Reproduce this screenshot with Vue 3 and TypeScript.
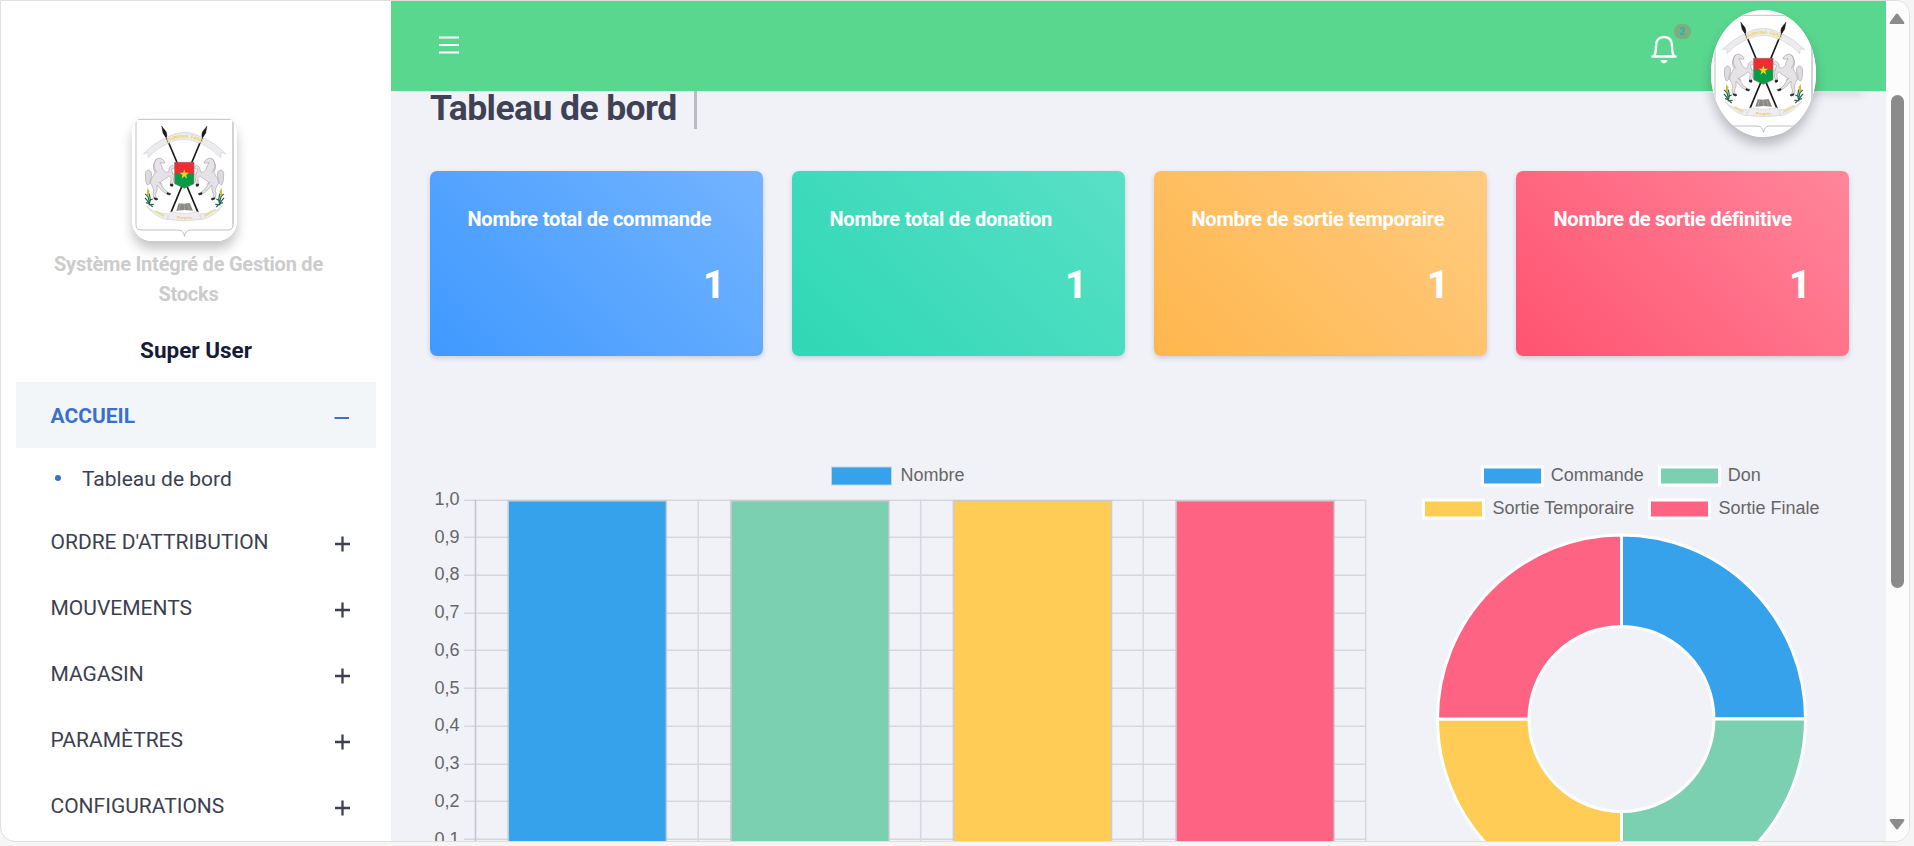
<script setup lang="ts">
interface Series { label: string; color: string }

const cards = [
  { title: 'Nombre total de commande', value: 1, tone: 'blue' },
  { title: 'Nombre total de donation', value: 1, tone: 'green' },
  { title: 'Nombre de sortie temporaire', value: 1, tone: 'orange' },
  { title: 'Nombre de sortie définitive', value: 1, tone: 'red' },
]
const menu = ["ORDRE D'ATTRIBUTION", 'MOUVEMENTS', 'MAGASIN', 'PARAMÈTRES', 'CONFIGURATIONS']
const series: Series[] = [
  { label: 'Commande', color: '#36a2eb' },
  { label: 'Don', color: '#7bd0b1' },
  { label: 'Sortie Temporaire', color: '#ffcd56' },
  { label: 'Sortie Finale', color: '#ff6384' },
]
const legend = [
  { x: 72.5, y: 17, tx: 140.8 },
  { x: 249.5, y: 17, tx: 317.8 },
  { x: 13.5, y: 50, tx: 82.5 },
  { x: 239.5, y: 50, tx: 308.5 },
]
const ticks = ['1,0', '0,9', '0,8', '0,7', '0,6', '0,5', '0,4', '0,3', '0,2', '0,1']
const step = 37.74
const tickY = (i: number) => Math.round(50 + i * step - 0.5) + 0.5

// Quarter of the ring, clockwise from the top
function arc(i: number): string {
  const cx = 211.5, cy = 269, R = 184, r = 92.5
  const p = (rad: number, k: number) => {
    const a = (k * Math.PI) / 2 - Math.PI / 2
    return `${(cx + rad * Math.cos(a)).toFixed(2)} ${(cy + rad * Math.sin(a)).toFixed(2)}`
  }
  return `M${p(R, i)}A${R} ${R} 0 0 1 ${p(R, i + 1)}L${p(r, i + 1)}A${r} ${r} 0 0 0 ${p(r, i)}Z`
}
</script>

<template>
  <svg class="defs" width="0" height="0" aria-hidden="true">
    <symbol id="emblem" viewBox="396 102 315 381">
      <rect x="396" y="102" width="315" height="381" fill="#fff" />
      <path d="M408 118H699V434Q699 450 683 450H570Q556 452 553.500 469Q551 452 537 450H424Q408 450 408 434Z" fill="none" stroke="#b4b4b4" stroke-width="2.500" />
      <path d="M699 122V434" stroke="#c4c4c4" stroke-width="3" />
      <g stroke="#1b1b1b" stroke-width="5" fill="#1b1b1b">
        <path d="M490 150L594 397M616 150L513 397" />
        <path d="M485 138L499 156L501 166L497 171L489 160Z M621 138L607 156L605 166L609 171L617 160Z" stroke-width="1" />
      </g>
      <g fill="#ececf0" stroke="#c6c6cc" stroke-width="1.500">
        <path d="M500 172Q553 142 606 172L601 190Q553 166 505 190Z" />
        <path d="M496 174Q460 190 430 221L443 218L444 233Q470 205 503 191Z" />
        <path d="M611 174Q647 190 677 221L664 218L662 233Q636 205 604 191Z" />
      </g>
      <path id="bannerTop" d="M503 187Q553 160 606 187" fill="none" />
      <text class="banner"><textPath href="#bannerTop" startOffset="2">BURKINA&#160; FASO</textPath></text>
      <g id="steed">
        <path d="M464 247Q466 235 477 234L486 237L495 245L493 250L480 248Q487 258 488 268Q497 280 506 276L508 263L517 255L523 260V266L514 267L519 283L521 304L515 315L511 308L514 295L507 287Q500 296 491 299L480 308L492 328L508 340L504 344L488 334L471 315Q474 331 466 344L470 357L462 356L459 343Q465 330 457 319Q448 310 453 298Q460 288 465 277Q458 265 461 253Z" fill="#e6e3e7" stroke="#aaa6ac" stroke-width="2" />
        <path d="M453 294Q458 278 449 271Q439 268 436 280L437 302L441 314Q452 314 450 302L453 296Z" fill="#dedbe0" stroke="#aaa6ac" stroke-width="2" />
        <path d="M470 237Q460 245 463 263L470 278M475 306L487 313M515 278L524 285" fill="none" stroke="#aaa6ac" stroke-width="2" />
        <path d="M463 353L474 357L469 360L463 357ZM501 338L512 341L509 345L501 342ZM511 312L519 313L518 319L512 318Z" fill="#1d1d1d" stroke="#1d1d1d" stroke-width="2" />
        <path d="M436 342L444 350L447 362L458 357M435 354L442 362L450 374L461 373M438 368L448 371L458 381M448 341L451 360L447 376" fill="none" stroke="#24674a" stroke-width="3.500" />
        <path d="M442 323L448 334L447 348L440 346Z" fill="#d6b739" />
      </g>
      <use href="#steed" transform="matrix(-1 0 0 1 1107 0)" />
      <path d="M524 247H582V283H524Z" fill="#ed2c34" />
      <path d="M524 282H582V311L553 325L524 311Z" fill="#069b47" />
      <path d="M524 247H582V311L553 325L524 311Z" fill="none" stroke="#8b6d68" stroke-width="2" />
      <path d="M553 268L556.500 278.500H567L558.500 285L561.500 296L553 289L544.500 296L547.500 285L539 278.500H549.500Z" fill="#fbd522" />
      <path d="M536 370L552 371L569 369L579 392L554 390L529 392Z" fill="#8b8884" />
      <path d="M552 371L554 390M541 372L537 390M562 372L568 389" stroke="#b9b6b2" stroke-width="2" />
      <g fill="#efedf1" stroke="#cbc9ce" stroke-width="1.500">
        <path d="M438 377Q464 402 505 401L502 420Q463 410 438 377Z" />
        <path d="M668 377Q642 402 601 401L604 420Q643 410 668 377Z" />
        <path d="M512 395Q553 405 594 395L604 418Q553 427 502 418Z" />
      </g>
      <text class="motto" transform="translate(465 396) rotate(30)">Unité</text>
      <text class="motto" x="531" y="416">Progrès</text>
      <text class="motto" transform="translate(613 412) rotate(-31)">Justice</text>
    </symbol>
  </svg>

  <div class="screen">
    <div class="window">
      <aside class="sidebar">
        <svg class="logo"><use href="#emblem" /></svg>
        <p class="brand">Système Intégré de Gestion de Stocks</p>
        <p class="user">Super User</p>
        <nav>
          <a class="item active"><span>ACCUEIL</span>
            <svg class="sign" viewBox="0 0 16 16"><path d="M0.500 8H15" /></svg>
          </a>
          <a class="sub"><i class="dot"></i>Tableau de bord</a>
          <a v-for="m in menu" :key="m" class="item"><span>{{ m }}</span>
            <svg class="sign" viewBox="0 0 16 16"><path d="M1 8H16M8.500 0.500V15.500" /></svg>
          </a>
        </nav>
      </aside>

      <main class="main">
        <header class="topbar">
          <svg class="burger" viewBox="0 0 22 18"><path d="M1 1.500H21M1 9H21M1 16.500H21" /></svg>
          <div class="right">
            <div class="bell">
              <svg viewBox="0 0 26 30"><path d="M1.500 21.500H24.500M3 21C5 18.500 5 15 5 11C5 5 8 2 13 2C18 2 21 5 21 11C21 15 21 18.500 23 21" /><path class="clapper" d="M10.500 26Q13 29 15.500 26Z" /></svg>
              <span class="count">2</span>
            </div>
            <svg class="avatar"><use href="#emblem" /></svg>
          </div>
        </header>

        <section class="content">
          <h1>Tableau de bord</h1>
          <div class="cards">
            <article v-for="c in cards" :key="c.title" class="card" :class="c.tone">
              <h2>{{ c.title }}</h2>
              <strong>{{ c.value }}</strong>
            </article>
          </div>
          <div class="charts">
            <svg class="bars" viewBox="430 450 940 391" width="940" height="391">
              <rect x="831.500" y="467" width="60" height="18" fill="#36a2eb" stroke="#c9d0da" stroke-width="1" />
              <text x="900.500" y="481">Nombre</text>
              <g stroke="#d6d7dc" stroke-width="1.500">
                <line v-for="(t, i) in ticks" :key="t" x1="464" x2="1366" :y1="449.7 + tickY(i)" :y2="449.7 + tickY(i)" />
                <line v-for="i in 4" :key="i" :x1="475.7 + i * 222.5" :x2="475.7 + i * 222.5" y1="500" y2="841" />
              </g>
              <line x1="475.500" x2="475.500" y1="500" y2="841" stroke="#c3c4c9" stroke-width="1.500" />
              <text v-for="(t, i) in ticks" :key="t" x="459.500" :y="505 + i * step" text-anchor="end">{{ t }}</text>
              <g v-for="(s, i) in series" :key="s.label">
                <rect :x="508.700 + i * 222.6" y="501" width="157.500" height="345" :fill="s.color" />
                <path :d="`M${508.200 + i * 222.6} 845V500.800H${666.300 + i * 222.6}V845`" fill="none" stroke="#c3c6cc" stroke-opacity="0.75" stroke-width="1.700" />
              </g>
            </svg>
            <svg class="ring" viewBox="0 0 430 391" width="430" height="391">
              <g v-for="(s, i) in series" :key="s.label">
                <rect :x="legend[i].x" :y="legend[i].y" width="60" height="18" :fill="s.color" stroke="#fff" stroke-width="3" />
                <text :x="legend[i].tx" :y="legend[i].y + 14">{{ s.label }}</text>
                <path :d="arc(i)" :fill="s.color" stroke="#fff" stroke-width="3" />
              </g>
            </svg>
          </div>
        </section>
      </main>

      <div class="scroll">
        <svg viewBox="0 0 16 12"><path d="M7 1Q8 0 9 1L15 9Q16 11 14 11H2Q0 11 1 9Z" /></svg>
        <div class="thumb"></div>
        <svg class="down" viewBox="0 0 16 12"><path d="M7 11Q8 12 9 11L15 3Q16 1 14 1H2Q0 1 1 3Z" /></svg>
      </div>
    </div>
  </div>
</template>

<style>
body { margin: 0; overflow: hidden; }
</style>

<style scoped>
* { box-sizing: border-box; }
p, h1, h2 { margin: 0; }
.defs { position: absolute; }
.banner { font: bold 14px "Liberation Sans", sans-serif; fill: #ebd650; letter-spacing: -0.3px; }
.motto { font: bold 12px "Liberation Sans", sans-serif; fill: #e6d04d; }
.screen { width: 1914px; height: 846px; background: #f5f5f5; font-family: Roboto, sans-serif; overflow: hidden; }
.window { display: flex; width: 1910px; height: 842px; border: 1px solid #dfdfdf; border-radius: 0 14px 15px 15px; overflow: hidden; background: #fff; }
.sidebar { width: 390px; flex: none; display: flex; flex-direction: column; padding: 113px 15px 0; }
.logo, .avatar { display: block; width: 105px; height: 127px; background: #fff; box-shadow: 0 8px 12px rgba(0, 0, 0, .23); }
.logo { margin-left: 116px; border-radius: 20px; }
.brand { width: 300px; margin: 8px 0 0 22.500px; text-align: center; font-size: 20px; line-height: 30px; font-weight: 700; color: #ccc; letter-spacing: -.23px; }
.user { margin: 24px 0 0; text-align: center; font-size: 22.500px; line-height: 34px; font-weight: 700; color: #171b36; }
nav { margin-top: 15px; }
.item { display: flex; align-items: center; justify-content: space-between; height: 66px; padding: 1px 26px 0 34.500px; font-size: 21px; color: #3d3f51; }
.active { background: #f2f6f9; color: #3b71ca; font-weight: 700; }
.sign { width: 16px; height: 16px; margin-top: 4px; fill: none; stroke: currentColor; stroke-width: 2.300; }
.active .sign { margin-right: .5px; stroke-width: 2; }
.sub { display: flex; align-items: center; height: 60px; padding: 1px 0 0 39px; font-size: 21px; color: #3d3f51; }
.dot { width: 6px; height: 6px; margin: -2px 21px 0 0; border-radius: 50%; background: #3b71ca; }
.main { width: 1495px; flex: none; background: #f1f2f8; display: flex; flex-direction: column; }
.topbar { flex: none; height: 90px; display: flex; justify-content: space-between; align-items: flex-start; padding: 0 70px 0 47px; position: relative; z-index: 1; }
.topbar::after { content: ""; position: absolute; z-index: -1; left: 1330px; top: 72px; width: 142px; height: 18px; box-shadow: 0 4px 10px rgba(0, 0, 0, .1); }
.topbar::before { content: ""; position: absolute; inset: 0; background: #59d78f; z-index: 0; }
.topbar > * { position: relative; z-index: 1; }
.burger { width: 22px; height: 18px; margin-top: 35px; fill: none; stroke: #fff; stroke-width: 2; }
.right { display: flex; }
.bell { position: relative; width: 26px; height: 30px; margin: 34px 34px 0 0; }
.bell svg { display: block; width: 26px; height: 30px; fill: none; stroke: #fff; stroke-width: 2.400; stroke-linecap: round; stroke-linejoin: round; }
.bell .clapper { fill: #fff; stroke-width: 1.800; }
.count { position: absolute; left: 22.500px; top: -11px; width: 17px; height: 14.500px; border-radius: 7px; background: #7dae80; color: #27b3b6; font-size: 11px; line-height: 15px; font-weight: 700; text-align: center; }
.avatar { margin-top: 9px; border-radius: 50%; }
.content { padding: 0 37px 0 39px; }
h1 { width: fit-content; height: 54px; margin-top: -16px; padding-right: 17px; border-right: 3px solid #bbbbbd; font-size: 35.500px; line-height: 67px; font-weight: 700; letter-spacing: -.58px; color: #3f4254; white-space: nowrap; }
.cards { display: grid; grid-template-columns: repeat(4, 333px); gap: 29px; margin-top: 42px; }
.card { display: flex; flex-direction: column; height: 185px; padding: 33px 42px 0 37.500px; border-radius: 7px; color: #fff; box-shadow: 0 2px 5px rgba(60, 70, 100, .22); }
h2 { font-size: 20px; line-height: 30px; font-weight: 700; letter-spacing: -.25px; white-space: nowrap; }
.card strong { align-self: flex-end; margin: 24px -4px 0 0; font-size: 38px; line-height: 54px; font-weight: 800; }
.blue { background: linear-gradient(45deg, #4099ff, #73b4ff); }
.green { background: linear-gradient(45deg, #2ed8b6, #59e0c5); }
.orange { background: linear-gradient(45deg, #ffb64d, #ffcb80); }
.red { background: linear-gradient(45deg, #ff5370, #ff869a); }
.charts { display: flex; margin-top: 94px; }
.charts svg { flex: none; }
.ring { margin-left: 40px; }
.charts text { font: 18px "Liberation Sans", Arial, sans-serif; fill: #666; }
.scroll { flex: 1; background: #fcfcfc; display: flex; flex-direction: column; align-items: center; justify-content: space-between; padding: 12px 4px 11px 3px; }
.scroll svg { width: 16px; height: 12px; fill: #8b8b8b; }
.thumb { width: 13px; height: 493px; margin: 70px 0 auto; border-radius: 7px; background: #8b8b8b; }
</style>
